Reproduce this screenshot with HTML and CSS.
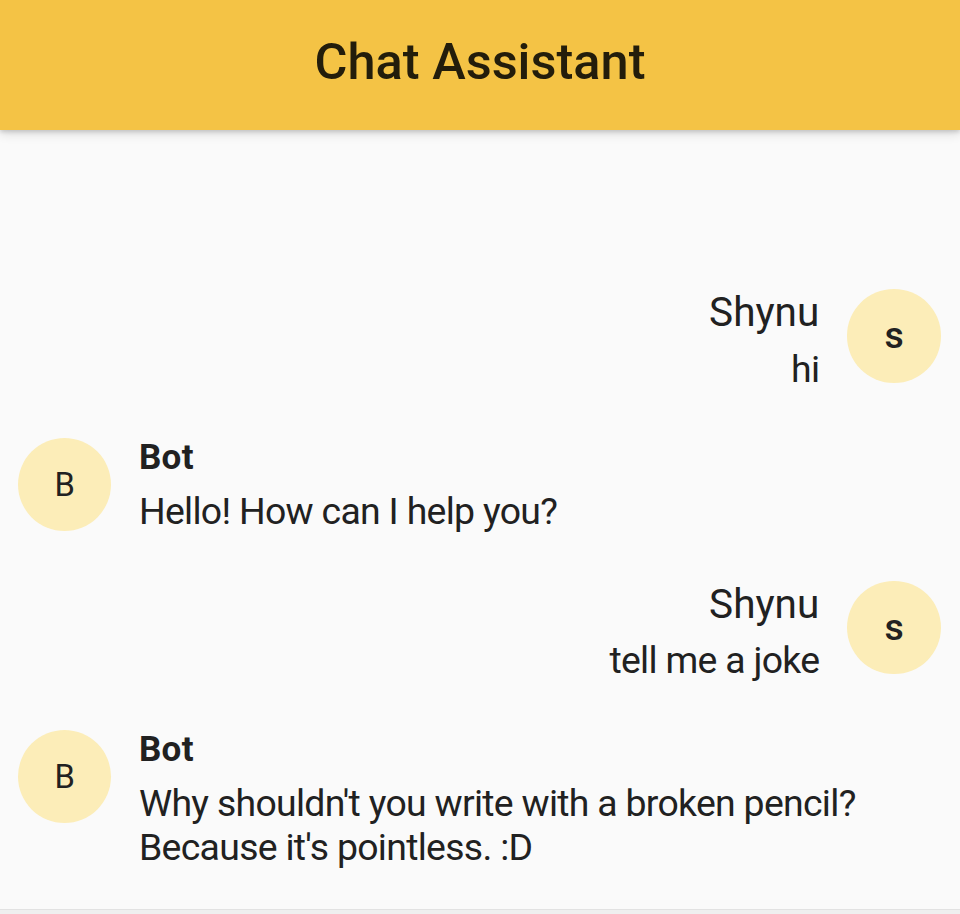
FILE: index.html
```html
<!DOCTYPE html>
<html lang="en">
<head>
<meta charset="utf-8">
<title>Chat Assistant</title>
<link rel="stylesheet" href="styles.css">
</head>
<body>
<div class="app">
  <header class="appbar">
    <h1 class="title">Chat Assistant</h1>
  </header>
  <main class="chat">
    <div class="messages">
      <div class="msg msg-user">
        <div class="msg-body">
          <div class="name name-user">Shynu</div>
          <div class="text">hi</div>
        </div>
        <div class="avatar avatar-user">s</div>
      </div>
      <div class="msg msg-bot">
        <div class="avatar avatar-bot">B</div>
        <div class="msg-body">
          <div class="name name-bot">Bot</div>
          <div class="text">Hello! How can I help you?</div>
        </div>
      </div>
      <div class="msg msg-user">
        <div class="msg-body">
          <div class="name name-user">Shynu</div>
          <div class="text">tell me a joke</div>
        </div>
        <div class="avatar avatar-user">s</div>
      </div>
      <div class="msg msg-bot">
        <div class="avatar avatar-bot">B</div>
        <div class="msg-body">
          <div class="name name-bot">Bot</div>
          <div class="text">Why shouldn't you write with a broken pencil?<br>Because it's pointless. :D</div>
        </div>
      </div>
    </div>
  </main>
  <footer class="composer"></footer>
</div>
</body>
</html>
```
FILE: styles.css
```css
* { box-sizing: border-box; }
html, body {
  margin: 0;
  padding: 0;
  height: 100%;
}
body {
  background: #fafafa;
  font-family: Roboto, "Noto Sans", sans-serif;
  color: #212121;
  overflow: hidden;
}
.app {
  height: 914px;
  display: flex;
  flex-direction: column;
}
.appbar {
  height: 130px;
  flex: 0 0 130px;
  background: #f4c345;
  display: flex;
  align-items: center;
  justify-content: center;
  box-shadow: 0 2px 4px rgba(0,0,0,0.14), 0 4px 10px rgba(0,0,0,0.12);
  position: relative;
  z-index: 1;
}
.title {
  margin: 0;
  font-size: 50.5px;
  font-weight: 500;
  color: #231d0b;
  letter-spacing: 0;
  line-height: 1;
  padding-bottom: 6px;
}
.chat {
  flex: 1;
  display: flex;
  flex-direction: column;
  justify-content: flex-end;
  padding-bottom: 15.6px;
}
.messages {
  display: flex;
  flex-direction: column;
}
.msg {
  display: flex;
  align-items: flex-start;
  margin: 23.4px 0;
}
.msg-user {
  justify-content: flex-end;
  padding-right: 19.3px;
}
.msg-bot {
  padding-left: 18px;
}
.avatar {
  width: 93.4px;
  height: 93.4px;
  flex: 0 0 93.4px;
  border-radius: 50%;
  background: #fcedb8;
  display: flex;
  align-items: center;
  justify-content: center;
  color: #212121;
}
.avatar-user {
  margin-left: 28px;
  font-size: 37.4px;
  font-weight: 500;
  padding-bottom: 2px;
}
.avatar-bot {
  margin-right: 27.6px;
  font-size: 32.7px;
  font-weight: 400;
}
.msg-user .msg-body {
  text-align: right;
}
.name-user {
  font-size: 40.5px;
  line-height: 46.7px;
  font-weight: 400;
}
.name-bot {
  font-size: 35px;
  line-height: 40.7px;
  font-weight: 700;
  letter-spacing: 0.3px;
}
.text {
  margin-top: 11.7px;
  font-size: 37.4px;
  line-height: 43.8px;
  letter-spacing: -0.7px;
}
.composer {
  flex: 0 0 5px;
  background: #efefef;
  border-top: 1px solid #e2e2e2;
}
```
